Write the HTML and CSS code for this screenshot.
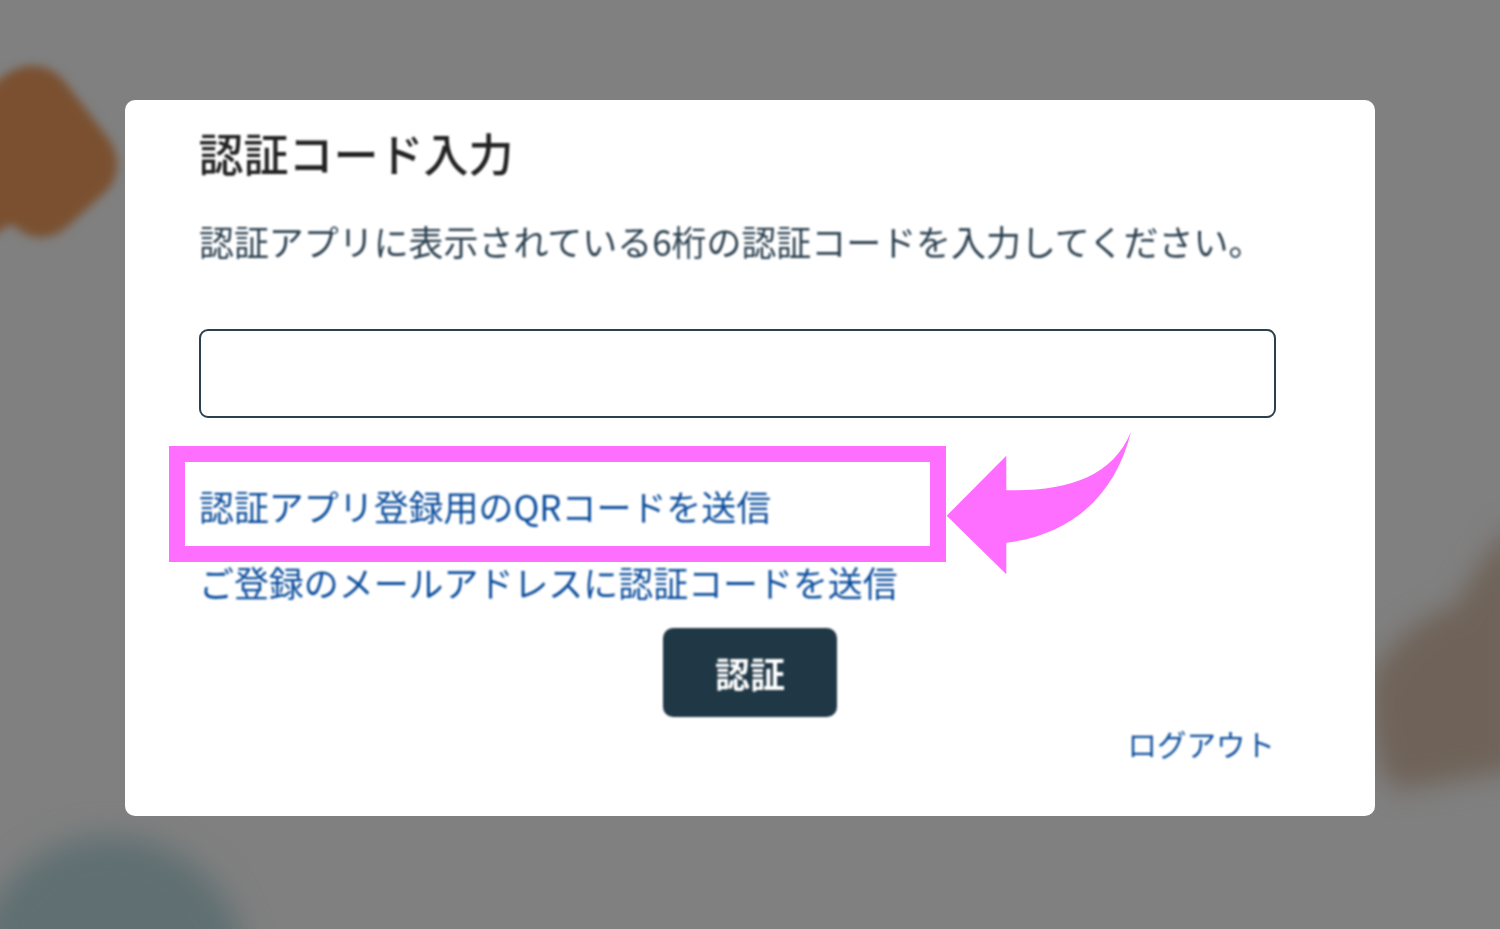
FILE: index.html
```html
<!DOCTYPE html>
<html lang="ja">
<head>
<meta charset="utf-8">
<title>認証コード入力</title>
<link rel="stylesheet" href="styles.css">
</head>
<body>
<svg class="backdrop" viewBox="0 0 1500 929" aria-hidden="true">
  <path class="blob-brown" d="M-20 105C0 66 40 52 65 82L108 138C122 158 120 182 100 197L66 228C48 242 28 240 12 224L-20 242Z"/>
  <path class="blob-taupe" d="M1370 680C1390 640 1425 612 1455 606C1475 570 1490 545 1520 520V770L1400 790C1375 785 1368 720 1370 680Z"/>
  <circle class="blob-slate" cx="110" cy="972" r="136"/>
</svg>
<main class="page">
  <section class="card">
    <h1 class="title">認証コード入力</h1>
    <p class="lead">認証アプリに表示されている6桁の認証コードを入力してください。</p>
    <input class="code" type="text" aria-label="認証コード">
    <a class="link link-first" href="#">認証アプリ登録用のQRコードを送信</a>
    <a class="link link-second" href="#">ご登録のメールアドレスに認証コードを送信</a>
    <button class="submit" type="button">認証</button>
    <a class="logout" href="#">ログアウト</a>
  </section>
</main>
<div class="highlight"></div>
<svg class="arrow" viewBox="0 0 1500 929" aria-hidden="true">
  <path d="M946.7 515.7L1006.3 455.7V490.3C1066 491 1112 478 1131 431.7C1115 497 1070 535 1006.3 542.7V574.3Z"/>
</svg>
</body>
</html>
```
FILE: styles.css
```css
* { box-sizing: border-box; }
html, body { margin: 0; height: 929px; overflow: hidden; }
body {
  background: #808080;
  font-family: "Noto Sans CJK JP", "Noto Sans", sans-serif;
  position: relative;
}
.backdrop, .arrow {
  position: absolute;
  left: 0;
  top: 0;
  width: 1500px;
  height: 929px;
}
.blob-brown { fill: #7a5030; filter: blur(5px); }
.blob-taupe { fill: #6f6359; filter: blur(13px); }
.blob-slate { fill: #5f6f72; filter: blur(15px); }
.page {
  position: relative;
  display: flex;
  justify-content: center;
  padding-top: 100px;
}
.card {
  width: 1250px;
  height: 716px;
  background: #fff;
  border-radius: 10px;
  padding: 21px 100px 0 75px;
  display: flex;
  flex-direction: column;
  align-items: flex-start;
}
.title, .lead, .link, .submit, .logout { filter: blur(0.8px); }
.title {
  margin: 0 0 0 -1.5px;
  font-size: 45px;
  line-height: 64px;
  font-weight: 500;
  color: #222;
}
.lead {
  margin: 30px 0 0 -1px;
  font-size: 34.95px;
  line-height: 52px;
  color: #2a3f4e;
  white-space: nowrap;
}
.code {
  width: calc(100% + 2px);
  height: 89px;
  margin: 62px 0 0 -1px;
  border: 2.5px solid #2b4150;
  border-radius: 9px;
  background: #fff;
}
.link, .logout { color: #0b4d9c; text-decoration: none; }
.link { font-size: 34.95px; line-height: 52px; white-space: nowrap; margin-left: -1px; }
.link-first { margin-top: 62px; }
.link-second { margin-top: 24px; }
.submit {
  align-self: center;
  width: 174px;
  height: 89px;
  margin: 20px 0 0 25px;
  border: 0;
  border-radius: 10px;
  background: #203745;
  color: #fff;
  font-family: inherit;
  font-size: 35px;
  font-weight: 700;
}
.logout {
  align-self: flex-end;
  margin-top: 6px;
  font-size: 29.5px;
  line-height: 40px;
}
.highlight {
  position: absolute;
  left: 169px;
  top: 446px;
  width: 777px;
  height: 116px;
  border: 16px solid #ff6fff;
}
.arrow path { fill: #ff6fff; }
```
